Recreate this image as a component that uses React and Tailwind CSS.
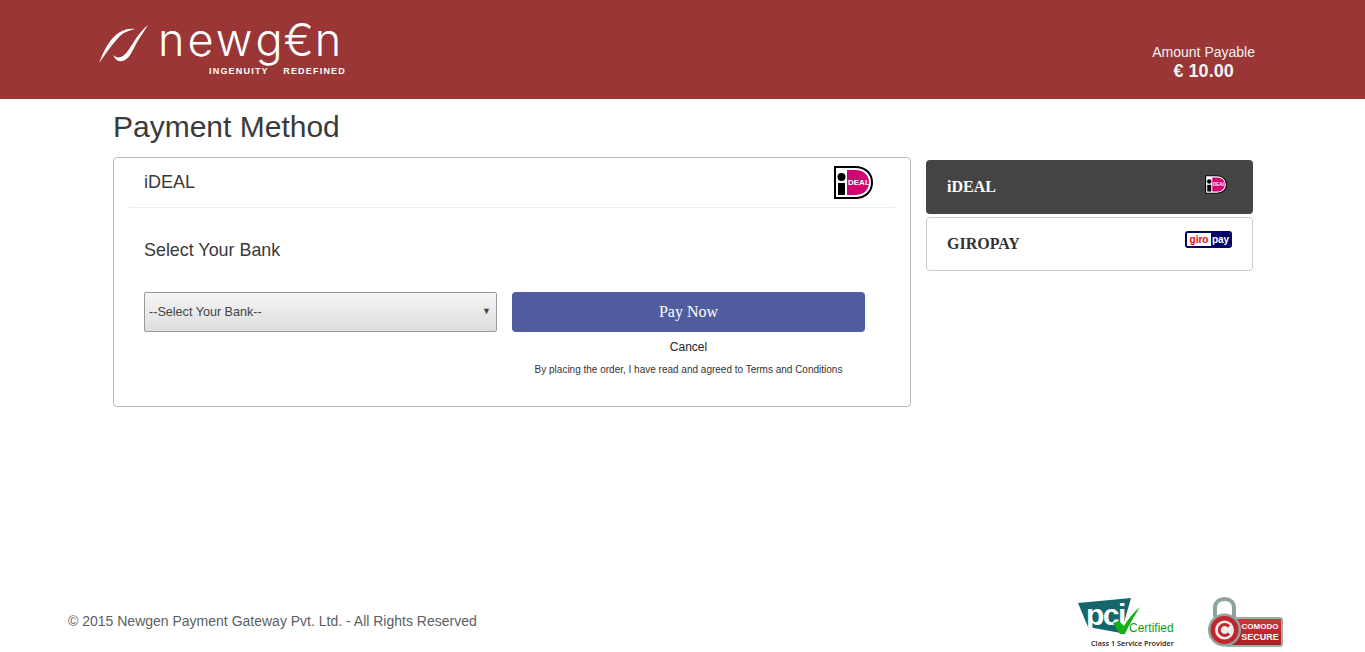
import React from "react";

const sans = { fontFamily: '"Liberation Sans", Arial, sans-serif' };

function LogoMark() {
  return (
    <svg width="52" height="42" viewBox="0 0 52 42" className="shrink-0">
      <path d="M1 39 C6 26 12 14 22 8 C27 5 33 4 37 5 C32 6 26 8 22 12 C14 20 7 31 1 39 Z" fill="#fff" />
      <path d="M50 1 C46 8 41 14 37 22 C33 30 30 36 24 37 C20 38 17 35 15 31 C18 34 22 34 25 32 C30 28 33 22 37 16 C40 11 45 5 50 1 Z" fill="#fff" />
    </svg>
  );
}

function IdealIcon({ small }) {
  return (
    <svg width={small ? 22 : 39} height={small ? 19 : 33} viewBox="0 0 39 33">
      <path d="M1 1 H21 C32 1 38 8 38 16.500 C38 25 32 32 21 32 H1 Z" fill="#fff" stroke="#000" strokeWidth="2" />
      <path d="M13 4 H21 C30 4 35 9.500 35 16.500 C35 23.500 30 29 21 29 H13 Z" fill="#d50172" />
      <circle cx="7.500" cy="11" r="4" fill="#000" />
      <rect x="4" y="17" width="7" height="12" fill="#000" />
      <text x="14" y="18.500" fontSize="8" fontWeight="700" fill="#fff" style={sans}>DEAL</text>
    </svg>
  );
}

function GiropayIcon() {
  return (
    <div className="flex w-[47px] h-[17px] rounded-[3px] border-2 border-[#000268] overflow-hidden leading-none" style={sans}>
      <span className="w-[24px] bg-white text-[#e30613] text-[10px] font-bold flex items-center justify-center">giro</span>
      <span className="flex-1 bg-[#000268] text-white text-[10px] font-bold flex items-center justify-center">pay</span>
    </div>
  );
}

function PciBadge() {
  return (
    <div className="relative w-[98px] h-[50px]" style={sans}>
      <svg width="98" height="50" viewBox="0 0 98 50" className="absolute left-0 top-0">
        <path d="M0 6 L53 1 L43 36 L10 30 Z" fill="#15656d" />
      </svg>
      <span className="absolute left-[8px] top-[1px] text-white text-[30px] font-bold tracking-[-1.500px] leading-[34px]">pci</span>
      <svg width="98" height="50" viewBox="0 0 98 50" className="absolute left-0 top-0">
        <path d="M35 26 L41 24 L46 29 C50 22 56 15 62 10 C57 18 51 28 47 37 L42 37 Z" fill="#12b212" />
      </svg>
      <span className="absolute left-[51px] top-[24px] text-[#12a012] text-[12px] leading-[14px]">Certified</span>
      <span className="absolute left-[13px] top-[41px] text-[#222] text-[7.300px] font-semibold leading-[10px] whitespace-nowrap" style={{ fontFamily: '"Open Sans", sans-serif' }}>Class 1 Service Provider</span>
    </div>
  );
}

function ComodoBadge() {
  return (
    <div className="relative w-[76px] h-[50px]" style={sans}>
      <div className="absolute left-[18px] top-[20px] w-[58px] h-[30px] rounded-[3px] bg-gradient-to-b from-[#d3343a] to-[#a91e24] border-2 border-[#9ab0a8] text-white font-bold text-center">
        <div className="text-[8px] leading-[11px] pt-[2px] pl-[12px]">COMODO</div>
        <div className="text-[9px] leading-[11px] pl-[12px]">SECURE</div>
      </div>
      <svg width="36" height="50" viewBox="0 0 36 50" className="absolute left-0 top-0">
        <path d="M8 20 V11 C8 5 12 2 17.500 2 C23 2 27 5 27 11 V20" fill="none" stroke="#8fa39d" strokeWidth="4" />
        <circle cx="17.500" cy="33" r="16.500" fill="#8fa39d" />
        <circle cx="17.500" cy="33" r="14" fill="#c4242b" />
        <circle cx="17.500" cy="33" r="9.500" fill="#eceeee" />
        <path d="M22 29.500 A5.500 5.500 0 1 0 22 36.500" fill="none" stroke="#c4242b" strokeWidth="3" />
      </svg>
    </div>
  );
}

export default function App() {
  return (
    <div className="min-h-[652px] bg-white flex flex-col text-[#333]" style={sans}>
      {/* header */}
      <header className="h-[99px] bg-[#9a3636] shrink-0 flex justify-between pl-[98px] pr-[110px]">
        <div className="pt-[24px] flex items-start">
          <LogoMark />
          <div className="ml-[8px] w-[188px] flex flex-col text-white">
            <span className="text-[45px] leading-[32px] whitespace-nowrap" style={{ fontFamily: 'Inter, sans-serif', fontWeight: 300 }}>
              <span className="tracking-[3px]">new</span>
              <span className="tracking-[1px]">g€n</span>
            </span>
            <div className="flex justify-between pl-[51px] text-[9px] leading-[10px] tracking-[1.200px] font-bold mt-[10px] whitespace-nowrap">
              <span>INGENUITY</span>
              <span>REDEFINED</span>
            </div>
          </div>
        </div>
        <div className="pt-[43px] text-center text-[#f2f2f2]">
          <div className="text-sm leading-[18px]">Amount Payable</div>
          <div className="text-lg leading-[20px] font-bold">€ 10.00</div>
        </div>
      </header>

      {/* main */}
      <main className="w-[1140px] ml-[113px]">
        <h1 className="text-[30px] leading-[33px] mt-[11px] mb-[14px] text-[#3a3a3a]">Payment Method</h1>
        <div className="flex gap-[15px] items-start">
          <section className="w-[798px] h-[250px] border border-[#bbb] rounded-[4px] px-[15px]">
            <div className="h-[50px] border-b border-[#eee] flex items-center justify-between pl-[15px] pr-[22px]">
              <span className="text-lg -mt-[2px] text-[#3a3a3a]">iDEAL</span>
              <IdealIcon />
            </div>
            <h2 className="text-[17.900px] leading-[20px] mt-[32px] ml-[15px] text-[#3a3a3a]">Select Your Bank</h2>
            <div className="flex gap-[15px] mt-[32px] ml-[15px]">
              <div className="relative w-[353px] h-[40px]">
                <select className="w-full h-full appearance-none border border-[#999] rounded-[2px] bg-gradient-to-b from-[#f5f5f5] to-[#dedede] pl-[4px] text-[12.600px] text-[#444] outline-none" style={sans}>
                  <option>--Select Your Bank--</option>
                </select>
                <span className="absolute right-[6px] top-[13px] text-[9px] leading-[12px] text-[#444] pointer-events-none">▼</span>
              </div>
              <div className="w-[353px] flex flex-col items-center">
                <button className="w-full h-[40px] rounded-[4px] bg-[#4f5d9e] text-white text-base" style={{ fontFamily: '"Liberation Serif", serif' }}>Pay Now</button>
                <a className="text-xs leading-[14px] mt-[8px] text-[#222]">Cancel</a>
                <p className="text-[10px] leading-[12px] mt-[10px] text-[#333]">By placing the order, I have read and agreed to Terms and Conditions</p>
              </div>
            </div>
          </section>

          <aside className="w-[327px] pt-[3px] flex flex-col gap-[3px]" style={{ fontFamily: '"Liberation Serif", serif' }}>
            <div className="h-[54px] rounded-[4px] bg-[#444] flex items-center justify-between pl-[21px] pr-[26px]">
              <span className="text-white text-base font-bold">iDEAL</span>
              <span className="-mt-[6px] flex"><IdealIcon small /></span>
            </div>
            <div className="h-[54px] rounded-[4px] border border-[#ccc] flex items-center justify-between pl-[20px] pr-[20px]">
              <span className="text-[#333] text-base font-bold">GIROPAY</span>
              <span className="-mt-[9px] flex"><GiropayIcon /></span>
            </div>
          </aside>
        </div>
      </main>

      {/* footer */}
      <footer className="mt-auto h-[62px] flex items-center justify-between pl-[68px] pr-[82px]">
        <span className="text-sm text-[#5a5f63]">© 2015 Newgen Payment Gateway Pvt. Ltd. - All Rights Reserved</span>
        <div className="flex items-center gap-[31px] pt-[2px]">
          <PciBadge />
          <ComodoBadge />
        </div>
      </footer>
    </div>
  );
}
